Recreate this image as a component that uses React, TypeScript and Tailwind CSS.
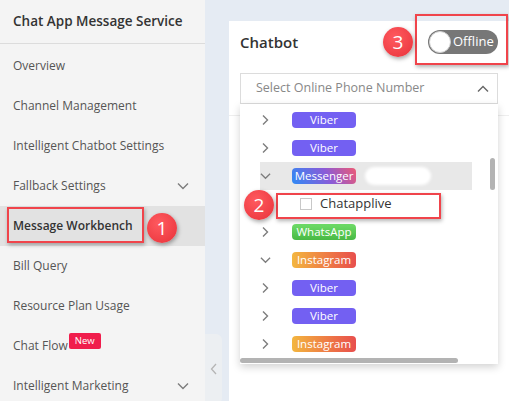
import React from "react";

const font = { fontFamily: '"Open Sans", "Noto Sans", Arial, sans-serif' };

function ChevronRight() {
  return (
    <svg width="10" height="12" viewBox="0 0 10 12" className="shrink-0">
      <path d="M3 1.5 L7.5 6 L3 10.5" fill="none" stroke="#7d7d7d" strokeWidth="1.4" />
    </svg>
  );
}

function ChevronDown({ color = "#7d7d7d", w = 12 }: { color?: string; w?: number }) {
  return (
    <svg width={w} height="8" viewBox="0 0 12 8" className="shrink-0">
      <path d="M1 1.5 L6 6.5 L11 1.5" fill="none" stroke={color} strokeWidth="1.4" />
    </svg>
  );
}

type Ch = "viber" | "messenger" | "whatsapp" | "instagram";

function Badge({ kind }: { kind: Ch }) {
  const label = { viber: "Viber", messenger: "Messenger", whatsapp: "WhatsApp", instagram: "Instagram" }[kind];
  const cls = {
    viber: "bg-[#7360f2]",
    messenger: "bg-[linear-gradient(60deg,#2f8af5_0%,#8a5bd8_55%,#ee5a74_100%)]",
    whatsapp: "bg-[linear-gradient(180deg,#6fdc68,#48b944)]",
    instagram: "bg-[linear-gradient(90deg,#f3b63f_0%,#ee7b45_55%,#e84f4d_100%)]",
  }[kind];
  return (
    <span className={`flex h-[16px] w-[64px] items-center justify-center rounded-[4px] text-[11.5px] leading-none text-white ${cls}`}>
      {label}
    </span>
  );
}

function Row({ kind, open, children }: { kind: Ch; open?: boolean; children?: React.ReactNode }) {
  return (
    <div className="flex h-[28px] items-center">
      <span className="flex w-[32px] items-center">
        {open ? <ChevronDown w={11} /> : <ChevronRight />}
      </span>
      <Badge kind={kind} />
      {children}
    </div>
  );
}

const menu = [
  "Overview",
  "Channel Management",
  "Intelligent Chatbot Settings",
  "Fallback Settings",
  "Message Workbench",
  "Bill Query",
  "Resource Plan Usage",
  "Chat Flow",
  "Intelligent Marketing",
];

function Marker({ n, className }: { n: string; className: string }) {
  return (
    <div
      className={`absolute flex h-[30px] w-[30px] items-center justify-center rounded-full bg-[radial-gradient(circle_at_40%_35%,#ff5a5f,#e8323a)] text-[19px] leading-none text-white shadow-[1px_2px_4px_rgba(0,0,0,0.35)] ${className}`}
    >
      {n}
    </div>
  );
}

export default function App() {
  return (
    <div style={font} className="relative flex h-[401px] w-[509px] overflow-hidden bg-[#e5ebf3]">
      {/* sidebar */}
      <aside className="w-[205px] shrink-0 bg-[#f4f4f4]">
        <div className="flex h-[44px] items-center border-b border-[#dcdcdc] pl-[13px] text-[13.5px] font-semibold text-[#333]">
          Chat App Message Service
        </div>
        <nav className="pt-[2px]">
          {menu.map((m) => {
            const active = m === "Message Workbench";
            const expandable = m === "Fallback Settings" || m === "Intelligent Marketing";
            return (
              <div
                key={m}
                className={`flex h-[40px] items-center justify-between pl-[13px] pr-[16px] text-[12px] ${
                  active ? "bg-[#e2e2e2] font-semibold text-[#333]" : "text-[#555]"
                }`}
              >
                <span className="flex items-center">
                  {m}
                  {m === "Chat Flow" && (
                    <span className="mb-[10px] ml-[1px] rounded-[2px] bg-[#f01d4c] px-[6px] py-[2px] text-[9.5px] leading-[12px] text-white">
                      New
                    </span>
                  )}
                </span>
                {expandable && <ChevronDown />}
              </div>
            );
          })}
        </nav>
      </aside>

      {/* main */}
      <main className="relative flex-1 pl-[24px] pt-[21px]">
        <div className="absolute left-0 top-[334px] flex h-[70px] w-[17px] items-center justify-center rounded-r-[6px] bg-[#eceff2]">
          <svg width="8" height="12" viewBox="0 0 8 12">
            <path d="M6 1 L1.5 6 L6 11" fill="none" stroke="#b5b5b5" strokeWidth="1.3" />
          </svg>
        </div>
        <div className="relative h-full bg-white">
          <div className="flex h-[52px] items-start justify-between px-[11px] pt-[9px]">
            <span className="text-[15px] font-semibold leading-[24px] text-[#333]">Chatbot</span>
            <div className="flex h-[24px] w-[70px] items-center rounded-full bg-[#777] pl-[1px]">
              <span className="h-[22px] w-[22px] rounded-full border border-[#d0d0d0] bg-white" />
              <span className="ml-[2px] text-[13px] text-white">Offline</span>
            </div>
          </div>
          <div className="border-b border-[#eeeeee] px-[11px] pb-[11px]">
            <div className="relative">
              <div className="flex h-[31px] items-center justify-between border border-[#dcdcdc] pl-[15px] pr-[8px] text-[12.5px] text-[#888]">
                <span>Select Online Phone Number</span>
                <svg width="12" height="8" viewBox="0 0 12 8">
                  <path d="M1 6.5 L6 1.5 L11 6.5" fill="none" stroke="#666" strokeWidth="1.4" />
                </svg>
              </div>
              {/* dropdown */}
              <div className="absolute left-0 right-0 top-full z-10 h-[260px] overflow-hidden bg-white pl-[20px] pt-[2px] shadow-[0_3px_8px_rgba(0,0,0,0.18)]">
                <Row kind="viber" />
                <Row kind="viber" />
                <div className="w-[212px] bg-[#e8e8e8]">
                  <Row kind="messenger" open>
                    <span className="ml-[9px] h-[18px] w-[66px] rounded-full bg-white blur-[1.5px]" />
                  </Row>
                </div>
                <div className="flex h-[28px] items-center pl-[40px]">
                  <span className="h-[12px] w-[12px] border border-[#c8c8c8] bg-white" />
                  <span className="ml-[8px] text-[13px] text-[#333]">Chatapplive</span>
                </div>
                <Row kind="whatsapp" />
                <Row kind="instagram" open />
                <Row kind="viber" />
                <Row kind="viber" />
                <Row kind="instagram" />
                <div className="absolute bottom-[1px] left-0 h-[5px] w-[218px] rounded-full bg-[#b3b3b3]" />
                <div className="absolute right-[3px] top-[54px] h-[32px] w-[5px] rounded-full bg-[#b3b3b3]" />
              </div>
            </div>
          </div>
        </div>
      </main>

      {/* annotations */}
      <div className="pointer-events-none absolute left-[7px] top-[207px] h-[36px] w-[137px] border-2 border-[#f0444b] shadow-[1px_2px_4px_rgba(0,0,0,0.3)]" />
      <Marker n="1" className="left-[147px] top-[213px]" />
      <div className="pointer-events-none absolute left-[276px] top-[193px] z-20 h-[26px] w-[165px] border-2 border-[#f0444b] shadow-[1px_2px_4px_rgba(0,0,0,0.3)]" />
      <Marker n="2" className="z-20 left-[244px] top-[190px]" />
      <div className="pointer-events-none absolute left-[415px] top-[14px] h-[51px] w-[93px] border-2 border-[#f0444b] shadow-[1px_2px_4px_rgba(0,0,0,0.3)]" />
      <Marker n="3" className="left-[383px] top-[27px]" />
    </div>
  );
}
